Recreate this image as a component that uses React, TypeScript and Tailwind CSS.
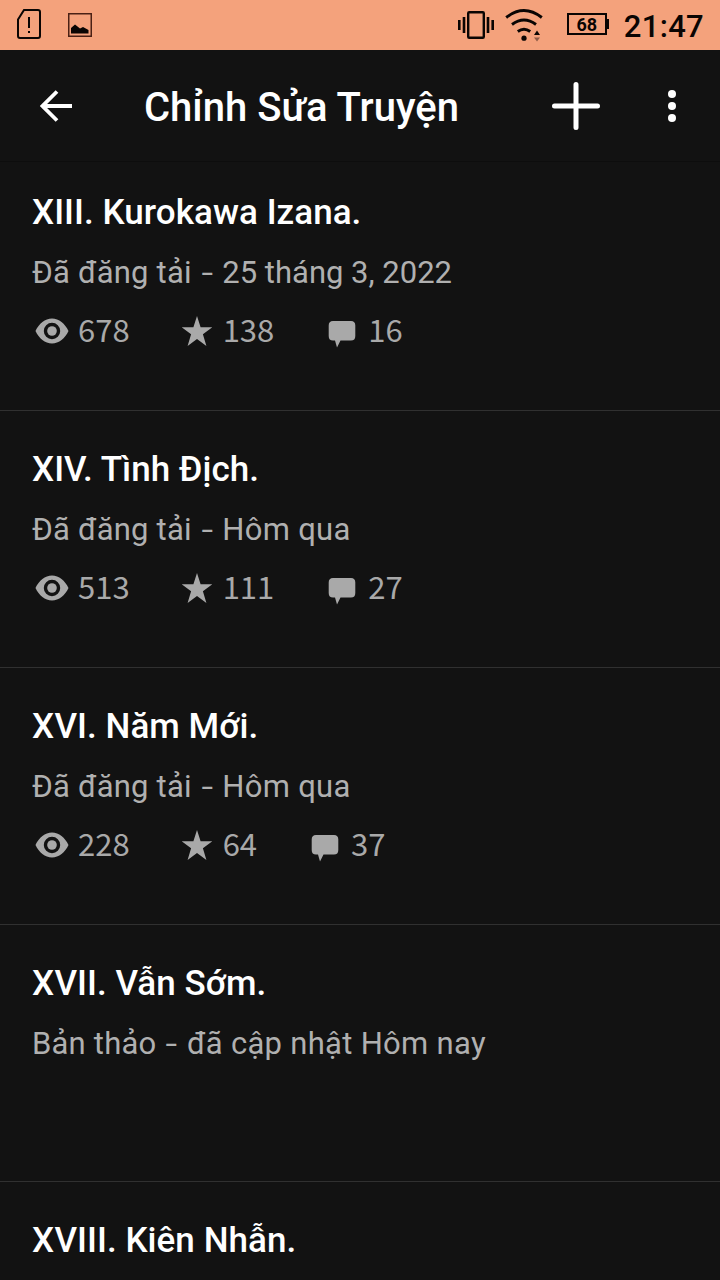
import React from 'react';
import clsx from 'clsx';

interface Chapter {
  title: string;
  status?: string;
  date?: string;
  views?: number;
  votes?: number;
  comments?: number;
}

const chapters: Chapter[] = [
  { title: 'XIII. Kurokawa Izana.', status: 'Đã đăng tải', date: '25 tháng 3, 2022', views: 678, votes: 138, comments: 16 },
  { title: 'XIV. Tình Địch.', status: 'Đã đăng tải', date: 'Hôm qua', views: 513, votes: 111, comments: 27 },
  { title: 'XVI. Năm Mới.', status: 'Đã đăng tải', date: 'Hôm qua', views: 228, votes: 64, comments: 37 },
  { title: 'XVII. Vẫn Sớm.', status: 'Bản thảo', date: 'đã cập nhật Hôm nay' },
  { title: 'XVIII. Kiên Nhẫn.' },
];

const EyeIcon = () => (
  <svg width="34" height="26" viewBox="0 0 34 26" fill="#a9a9a9">
    <path fillRule="evenodd" d="M0.5 13C4 5.500 10 0.500 17 0.500S30 5.500 33.500 13C30 20.500 24 25.500 17 25.500S4 20.500 0.500 13ZM17 4.800a8.200 8.200 0 1 0 0 16.400a8.200 8.200 0 1 0 0-16.400Z" />
    <circle cx="17" cy="13" r="4.800" />
  </svg>
);

const StarIcon = () => (
  <svg width="30" height="30" viewBox="0 0 30 30" fill="#a9a9a9">
    <path d="M15 0L18.600 11.300H30.300L20.900 18.300L24.400 30L15 23L5.600 30L9.100 18.300L-0.300 11.300H11.400Z" />
  </svg>
);

const CommentIcon = () => (
  <svg className="mt-1.5" width="28" height="28" viewBox="0 0 28 28" fill="#a9a9a9">
    <path d="M5 1H23Q27.300 1 27.300 5.500V16Q27.300 20.500 23 20.500H12.500L9 27.500L7 20.500H5Q0.700 20.500 0.700 16V5.500Q0.700 1 5 1Z" />
  </svg>
);

const StatusBar = () => (
  <div className="flex h-[50px] shrink-0 items-center bg-[#f4a27c] pr-4 pl-[17px]">
    <svg className="-mt-0.5" width="24" height="30" viewBox="0 0 24 30" fill="none" stroke="#0a0503" strokeWidth="2">
      <path d="M7 1H21Q23 1 23 3V27Q23 29 21 29H3Q1 29 1 27V10.500Z" />
      <path d="M12 8V19M12 22V24" />
    </svg>
    <svg className="ml-[27px]" width="24" height="24" viewBox="0 0 24 24">
      <rect x="0.750" y="0.750" width="22.500" height="22.500" fill="none" stroke="#4a2115" strokeWidth="1.500" />
      <path d="M3 20.500V15L7 11.500L12 15.500L15 14L20.500 17V20.500Z" fill="#0a0503" />
    </svg>
    <svg className="ml-auto" width="36" height="28" viewBox="0 0 36 28" stroke="#0a0503" fill="none">
      <rect x="10.200" y="1.200" width="15.600" height="25.600" rx="1" strokeWidth="2.400" />
      <path d="M1.300 9V19M34.700 9V19" strokeWidth="2.600" />
      <path d="M6 6V22M30 6V22" strokeWidth="2.600" />
    </svg>
    <svg className="ml-[11px]" width="38" height="34" viewBox="0 0 38 34" fill="none">
      <path d="M1.200 9.500Q19 -4.500 36.800 9.500M7 16.500Q19 7.500 31 16.500M12.800 23.500Q19 19 25.200 23.500" stroke="#0a0503" strokeWidth="2.900" />
      <circle cx="19" cy="30.200" r="2.600" fill="#0a0503" />
      <path d="M29 27L32 22.500L35 27Z" fill="#0a0503" />
      <path d="M29 29.500L32 33.500L35 29.500Z" fill="#8f5c47" />
    </svg>
    <div className="-mt-0.5 ml-6 flex items-center">
      <div className="flex h-[22px] w-[40px] items-center justify-center border-2 border-[#0a0503] pt-px text-[18px] font-bold text-[#0a0503]">
        68
      </div>
      <div className="h-2.5 w-0.5 bg-[#0a0503]"></div>
    </div>
    <span className="mt-0.5 ml-[15px] text-[31px] leading-none font-medium tracking-[0.3px] text-[#0a0503]">21:47</span>
  </div>
);

const Header = () => (
  <header className="flex h-28 shrink-0 items-center border-b border-[#0d0d0d] pt-px pr-[42px] pl-10">
    <svg width="32" height="32" viewBox="0 0 32 32" fill="none" stroke="#fff" strokeWidth="3.800">
      <path d="M17 1.500L2.500 16L17 30.500M2.500 16H32" />
    </svg>
    <h1 className="mt-1 ml-[72px] text-[40px] leading-none font-medium text-white">Chỉnh Sửa Truyện</h1>
    <svg className="ml-auto" width="48" height="48" viewBox="0 0 48 48" stroke="#fff" strokeWidth="5" strokeLinecap="round">
      <path d="M24 2.500V45.500M2.500 24H45.500" />
    </svg>
    <svg className="ml-[66px]" width="12" height="32" viewBox="0 0 12 32" fill="#fff">
      <circle cx="6" cy="4" r="4" />
      <circle cx="6" cy="16" r="4" />
      <circle cx="6" cy="28" r="4" />
    </svg>
  </header>
);

const ChapterRow = ({ chapter }: { chapter: Chapter }) => (
  <li className="h-[257px] shrink-0 border-b border-[#303030] pt-[35px] pl-8">
    <h2 className="text-[35px] leading-[48px] font-medium tracking-[0.05px] text-white">{chapter.title}</h2>
    {chapter.status && chapter.date && (
      <p className="mt-4 text-[31px] leading-10 tracking-[0.2px] text-[#b0b0b0]">
        {chapter.status} <span className="mx-[3px] inline-block scale-x-135">-</span>{' '}
        <span className={clsx(/^\d/.test(chapter.date) ? 'tracking-normal' : 'tracking-[0.3px]')}>{chapter.date}</span>
      </p>
    )}
    {chapter.views !== undefined && (
      <div className="mt-[18px] flex h-10 items-center pl-[3px] font-['Noto_Sans_CJK_JP',sans-serif] text-[31px] leading-10 text-[#a9a9a9]">
        <EyeIcon />
        <span className="-mt-1 mr-[52px] ml-[9px]">{chapter.views}</span>
        <StarIcon />
        <span className="-mt-1 mr-[54px] ml-[11px]">{chapter.votes}</span>
        <CommentIcon />
        <span className="-mt-1 ml-3">{chapter.comments}</span>
      </div>
    )}
  </li>
);

const App: React.FC = () => {
  return (
    <div className="flex h-[1280px] w-[720px] flex-col overflow-hidden bg-[#121212] font-[Roboto,sans-serif]">
      <StatusBar />
      <Header />
      {/* List is scrolled slightly under the header */}
      <ul className="-mt-2 flex flex-col">
        {chapters.map((chapter) => (
          <ChapterRow key={chapter.title} chapter={chapter} />
        ))}
      </ul>
    </div>
  );
};

export default App;
